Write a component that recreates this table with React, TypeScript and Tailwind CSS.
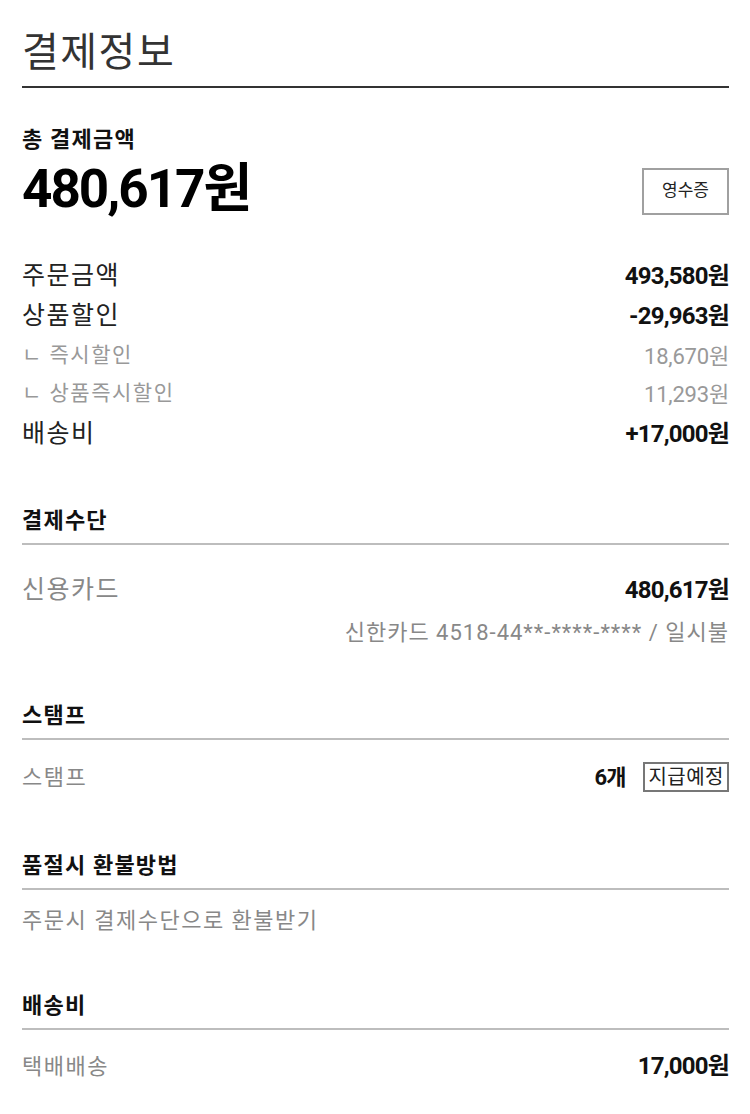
import React from "react";

const Row = ({
  label,
  value,
  h,
  labelCls,
  valueCls,
}: {
  label: React.ReactNode;
  value: React.ReactNode;
  h: string;
  labelCls: string;
  valueCls: string;
}) => (
  <div className={`flex items-center justify-between ${h}`}>
    <span className={labelCls}>{label}</span>
    <span className={valueCls}>{value}</span>
  </div>
);

const Header = ({ children, mt }: { children: React.ReactNode; mt: string }) => (
  <div className={`${mt} border-b-2 border-[#bdbdbd] pb-[8px]`}>
    <div className="text-[22px] leading-[28px] font-bold text-[#111] tracking-[1.2px]">{children}</div>
  </div>
);

export default function App() {
  const mainLabel = "text-[25px] text-[#222] tracking-[1.5px]";
  const subLabel = "text-[21px] text-[#999] tracking-[1.5px]";
  const grayLabel = "text-[25px] text-[#888] tracking-[1.5px]";
  const grayLabelSm = "text-[22px] text-[#888] tracking-[1.5px]";
  const boldVal = "text-[24px] font-bold text-[#111] tracking-[-0.8px]";
  const subVal = "text-[22px] text-[#999] tracking-[-0.2px]";

  return (
    <div className="w-[750px] min-h-[1114px] bg-white pl-[22px] pr-[21px] font-['Roboto','Noto_Sans_CJK_KR',sans-serif]">
      {/* title */}
      <div className="pt-[30px] pb-[10px] border-b-2 border-[#333]">
        <div className="text-[40px] leading-[46px] font-normal text-[#333] tracking-[1.5px]">결제정보</div>
      </div>

      {/* total */}
      <div className="mt-[38px] text-[22px] leading-[28px] font-bold text-[#111] tracking-[1.2px]">총 결제금액</div>
      <div className="mt-[5px] flex items-center justify-between h-[60px]">
        <span className="text-[53px] leading-[60px] font-bold text-[#000] tracking-[-2px]">480,617원</span>
        <button className="w-[87px] h-[47px] mt-[4px] border-2 border-[#a0a0a0] bg-white text-[17px] text-[#222] flex items-center justify-center">
          영수증
        </button>
      </div>

      {/* price rows */}
      <div className="mt-[37px] flex flex-col">
        <Row h="h-[40px]" label="주문금액" value="493,580원" labelCls={mainLabel} valueCls={boldVal} />
        <Row h="h-[40px]" label="상품할인" value="-29,963원" labelCls={mainLabel} valueCls={boldVal} />
        <Row h="h-[40px]" label="ㄴ 즉시할인" value="18,670원" labelCls={subLabel} valueCls={subVal} />
        <Row h="h-[36px]" label="ㄴ 상품즉시할인" value="11,293원" labelCls={subLabel} valueCls={subVal} />
        <Row h="h-[44px]" label="배송비" value="+17,000원" labelCls={mainLabel} valueCls={boldVal} />
      </div>

      {/* 결제수단 */}
      <Header mt="mt-[51px]">결제수단</Header>
      <div className="mt-[25px]">
        <Row h="h-[40px]" label="신용카드" value="480,617원" labelCls={grayLabel} valueCls={boldVal} />
        <div className="mt-[4px] h-[36px] flex items-center justify-end text-[22px] text-[#888] tracking-[1px]">
          신한카드 4518-44**-****-**** / 일시불
        </div>
      </div>

      {/* 스탬프 */}
      <Header mt="mt-[52px]">스탬프</Header>
      <div className="mt-[17px] h-[40px] flex items-center justify-between">
        <span className={grayLabelSm}>스탬프</span>
        <div className="flex items-center gap-[18px]">
          <span className="text-[22px] font-bold text-[#111] tracking-[-1px]">6개</span>
          <span className="h-[30px] px-[3px] border-2 border-[#777] text-[20px] leading-[24px] text-[#222] tracking-[0.5px] flex items-center">
            지급예정
          </span>
        </div>
      </div>

      {/* 품절시 환불방법 */}
      <Header mt="mt-[55px]">품절시 환불방법</Header>
      <div className="mt-[12px] h-[36px] flex items-center">
        <span className={grayLabelSm}>주문시 결제수단으로 환불받기</span>
      </div>

      {/* 배송비 */}
      <Header mt="mt-[54px]">배송비</Header>
      <div className="mt-[16px]">
        <Row h="h-[40px]" label="택배배송" value="17,000원" labelCls={grayLabelSm} valueCls={boldVal} />
      </div>
    </div>
  );
}
